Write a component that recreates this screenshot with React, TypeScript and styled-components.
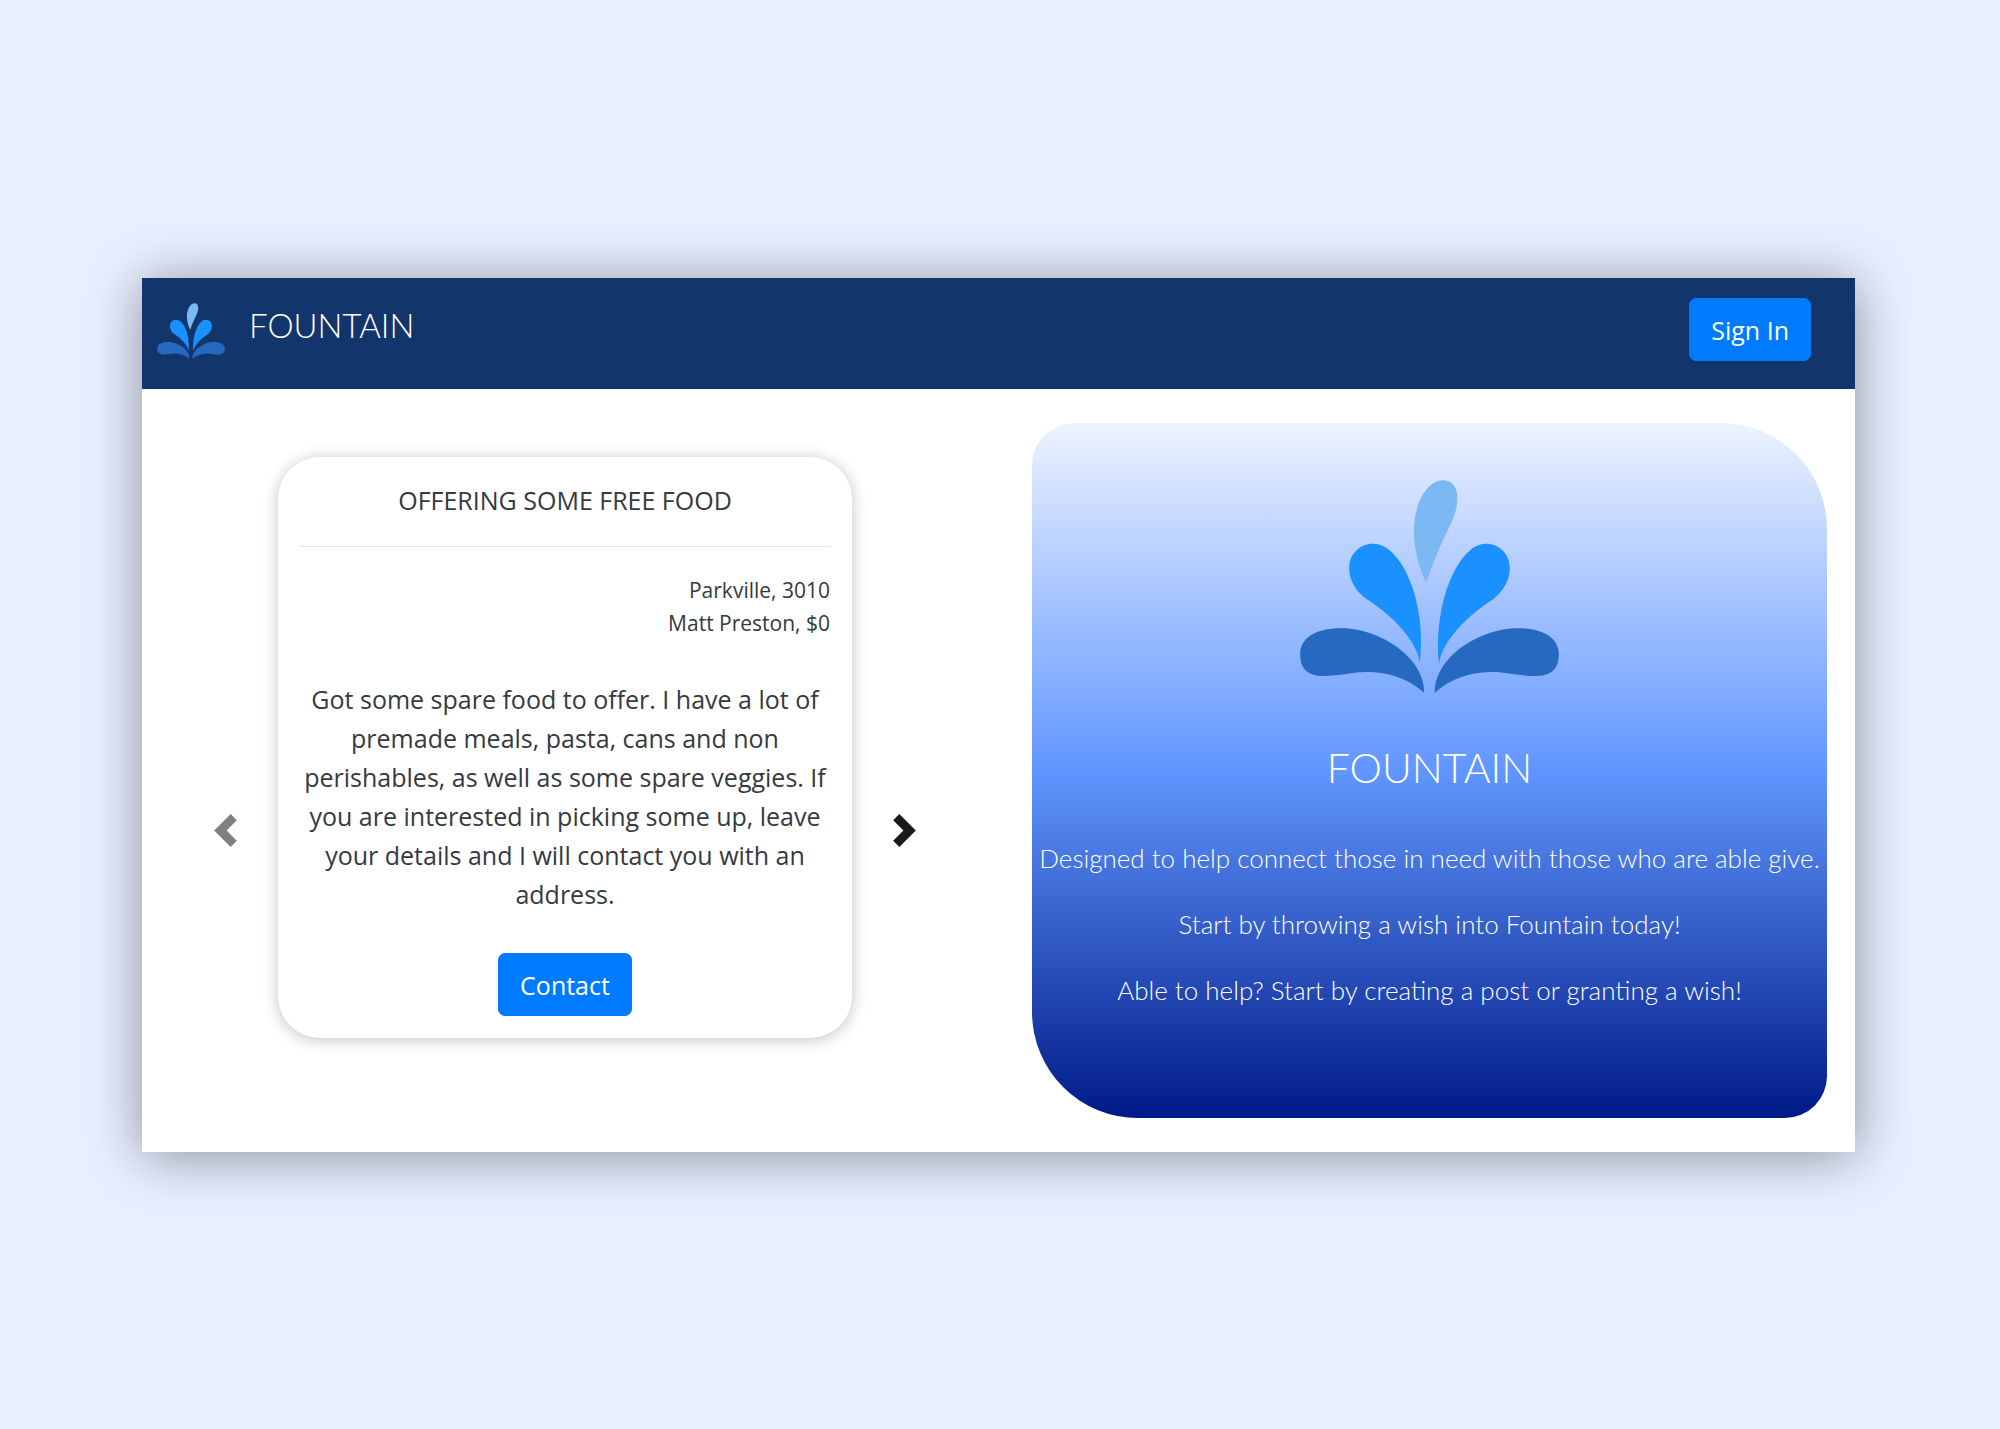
import React from "react";
import styled, { createGlobalStyle } from "styled-components";

const display = `Lato, "Open Sans", sans-serif`;

const GlobalStyle = createGlobalStyle`
  * { box-sizing: border-box; }
  body {
    margin: 0;
    background: #e8efff;
    color: #343a40;
    font-family: "Open Sans", "Noto Sans", sans-serif;
    font-size: 25px;
    line-height: 39px;
  }
  h1, h2, p { margin: 0; font-weight: 400; }
`;

const Page = styled.div`
  min-height: 100vh;
  display: flex;
  align-items: center;
  padding: 40px 145px 40px 142px;
`;

const Window = styled.div`
  flex: 1;
  min-width: 0;
  background: #fff;
  box-shadow: 0 4px 52px rgba(0, 0, 0, 0.4);
`;

const NavBar = styled.header`
  display: flex;
  align-items: center;
  justify-content: space-between;
  padding: 20px 44px 28px 15px;
  background: #12366b;
`;

const Brand = styled.a`
  display: flex;
  align-items: flex-start;
  gap: 24px;
  padding-top: 4px;
  color: #fff;
  font-family: ${display};
  font-size: 33px;
  font-weight: 300;
  line-height: 44px;
  text-decoration: none;
`;

const Button = styled.button`
  padding: 12px 21px 10px;
  border: 1px solid #007bff;
  border-radius: 7px;
  background: #007bff;
  color: #fff;
  font: inherit;
  cursor: pointer;
`;

const Main = styled.main`
  display: grid;
  grid-template-columns: minmax(0, 1fr) minmax(0, 1fr);
  gap: 64px;
  padding: 34px 28px 34px 31px;
`;

const Carousel = styled.section`
  display: flex;
  align-items: flex-start;
  padding: 34px 11px 0 0;
`;

const Arrow = styled.button<{ $dim?: boolean }>`
  flex: 0 0 105px;
  align-self: stretch;
  display: flex;
  align-items: center;
  justify-content: center;
  padding: 86px 0 0;
  border: 0;
  background: none;
  color: ${(p) => (p.$dim ? "#808080" : "#1a1a1a")};
  cursor: pointer;
`;

const Card = styled.article`
  flex: 1;
  min-width: 0;
  padding: 22px;
  border-radius: 42px;
  box-shadow: 0 2px 16px rgba(0, 0, 0, 0.24);
  text-align: center;
`;

const CardTitle = styled.h2`
  padding-bottom: 25px;
  border-bottom: 1px solid #e2e2e3;
  font-size: 25px;
  line-height: 42px;
`;

const Meta = styled.p`
  padding: 27px 0 40px;
  font-size: 21px;
  line-height: 33px;
  text-align: right;
`;

const Description = styled.p`
  padding-bottom: 39px;
`;

const Hero = styled.section`
  display: flex;
  flex-direction: column;
  align-items: center;
  padding: 57px 4px 108px;
  border-radius: 42px 106px;
  background: linear-gradient(#edf3ff, #6096ff 50%, #001a87);
  color: #fff;
  font-family: ${display};
  font-weight: 300;
  text-align: center;
`;

const HeroTitle = styled.h1`
  padding: 45px 0 41px;
  font-size: 41px;
  font-weight: 300;
  line-height: 60px;
`;

const HeroText = styled.p`
  font-size: 26px;
  font-weight: 300;

  & + & { margin-top: 27px; }
`;

function Logo({ width, height }: { width: number; height: number }) {
  return (
    <svg width={width} height={height} viewBox="56 60 784 642" aria-hidden="true">
      <path
        fill="#7cb9f3"
        d="M438 370C420 328 401 280 401 212C401 128 443 61 488 61C516 61 532 82 532 113C532 160 512 193 488 243C466 290 450 338 438 370Z"
      />
      <g fill="#1a91ff">
        <path d="M419 611C409 540 328 463 258 419C226 396 206 362 206 326C206 283 237 252 279 252C363 252 442 430 419 611Z" />
        <path d="M477 613C487 542 568 465 638 421C670 396 690 362 690 326C690 283 659 252 617 252C537 252 458 430 477 613Z" />
      </g>
      <g fill="#2669c1">
        <path d="M432 701C380 656 322 639 254 639C220 639 178 651 127 651C82 651 58 630 58 586C58 535 107 507 180 507C302 507 434 598 432 701Z" />
        <path d="M464 701C516 656 574 639 642 639C676 639 718 651 769 651C814 651 838 630 838 586C838 535 789 507 716 507C594 507 462 598 464 701Z" />
      </g>
    </svg>
  );
}

function Chevron({ path }: { path: string }) {
  return (
    <svg width="33" height="33" viewBox="0 0 8 8" fill="currentColor" aria-hidden="true">
      <path d={path} />
    </svg>
  );
}

export default function App() {
  return (
    <>
      <GlobalStyle />
      <Page>
        <Window>
          <NavBar>
            <Brand href="#">
              <Logo width={68} height={56} />
              FOUNTAIN
            </Brand>
            <Button type="button">Sign In</Button>
          </NavBar>
          <Main>
            <Carousel>
              <Arrow type="button" aria-label="Previous" $dim>
                <Chevron path="M5.25 0l-4 4 4 4 1.5-1.5L4.25 4l2.5-2.5L5.25 0z" />
              </Arrow>
              <Card>
                <CardTitle>OFFERING SOME FREE FOOD</CardTitle>
                <Meta>
                  Parkville, 3010
                  <br />
                  Matt Preston, $0
                </Meta>
                <Description>
                  Got some spare food to offer. I have a lot of premade meals, pasta, cans and non
                  perishables, as well as some spare veggies. If you are interested in picking some
                  up, leave your details and I will contact you with an address.
                </Description>
                <Button type="button">Contact</Button>
              </Card>
              <Arrow type="button" aria-label="Next">
                <Chevron path="M2.75 0l-1.5 1.5L3.75 4l-2.5 2.5L2.75 8l4-4-4-4z" />
              </Arrow>
            </Carousel>
            <Hero>
              <Logo width={261} height={213} />
              <HeroTitle>FOUNTAIN</HeroTitle>
              <HeroText>Designed to help connect those in need with those who are able give.</HeroText>
              <HeroText>Start by throwing a wish into Fountain today!</HeroText>
              <HeroText>Able to help? Start by creating a post or granting a wish!</HeroText>
            </Hero>
          </Main>
        </Window>
      </Page>
    </>
  );
}
